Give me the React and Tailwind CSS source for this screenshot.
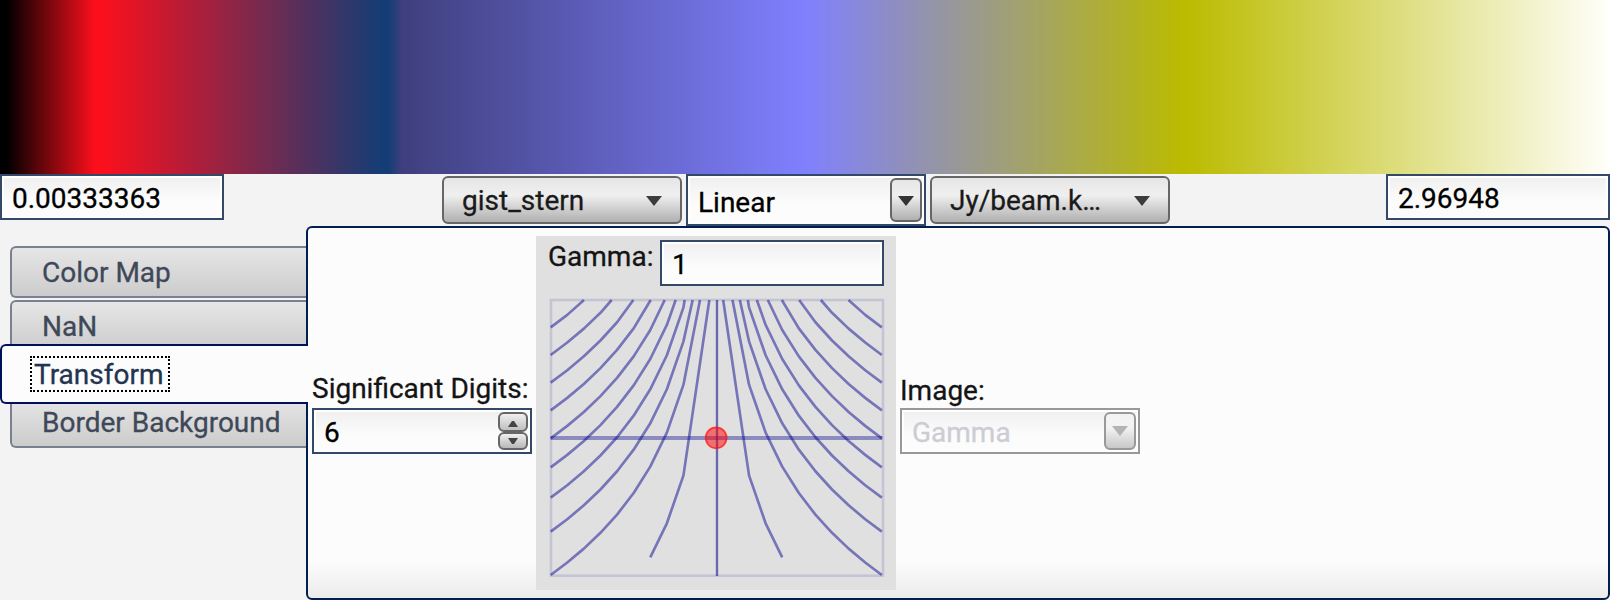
import React from "react";

const CENTER = 560;
const STEP = 49.8;
const TOP = 60;

// first: outermost sample (in tenths), y: height at that sample, top: x where the curve leaves the frame
const CURVES = [
  { first: 10, y: 142, top: 162 },
  { first: 10, y: 225, top: 245 },
  { first: 10, y: 308, top: 310 },
  { first: 10, y: 391, top: 362 },
  { first: 10, y: 475, top: 404 },
  { first: 10, y: 562, top: 437 },
  { first: 10, y: 653, top: 464 },
  { first: 10, y: 755, top: 488 },
  { first: 10, y: 885, top: 510 },
  { first: 4, y: 832, top: 538 },
];

function curvePoints({ first, y, top }, mirrored) {
  const points = [];
  for (let k = first; k >= 2; k--) {
    const py = y - 817 * Math.log10(first / k);
    if (py <= TOP + 15) break;
    points.push([CENTER - STEP * k, py]);
  }
  points.push([top, TOP]);
  return points
    .map(([px, py]) => `${mirrored ? 1117.5 - px : px},${py}`)
    .join(" ");
}

function GammaPlot() {
  return (
    <svg className="block h-[284px] w-[340px]" viewBox="48 48 1020 852" fill="none">
      <g stroke="#00008b" strokeOpacity="0.12" strokeWidth="8">
        <rect x="63" y="60" width="996" height="827" />
      </g>
      <path d="M62 474H1057" stroke="#00008b" strokeOpacity="0.38" strokeWidth="12" />
      <path d="M561 60V888" stroke="#00008b" strokeOpacity="0.54" strokeWidth="7" />
      <g stroke="#00008b" strokeOpacity="0.48" strokeWidth="8" strokeLinecap="butt" strokeLinejoin="round">
        {CURVES.map((c) => (
          <polyline key={`l${c.top}`} points={curvePoints(c, false)} />
        ))}
        {CURVES.map((c) => (
          <polyline key={`r${c.top}`} points={curvePoints(c, true)} />
        ))}
      </g>
      <circle cx="558.5" cy="473.5" r="31.5" fill="#ff0000" fillOpacity="0.5" stroke="#ff1414" strokeOpacity="0.75" strokeWidth="5" />
    </svg>
  );
}

function Triangle({ className = "" }) {
  return (
    <svg className={`block h-[10px] w-4 ${className}`} viewBox="0 0 16 10">
      <path d="M0 0H16L8 10Z" fill="currentColor" />
    </svg>
  );
}

const FIELD =
  "flex border-2 border-[#34496a] bg-linear-to-b from-[#efefef] to-[#fcfcfc] to-60% shadow-[inset_0_0_0_2px_#ffffff] text-black";

function Field({ value }) {
  return <div className={`${FIELD} h-[46px] w-56 pl-[10px] pt-[7px]`}>{value}</div>;
}

function SelectButton({ label }) {
  return (
    <button className="flex h-12 w-60 items-start justify-between rounded-[6px] border-2 border-[#666666] bg-linear-to-b from-[#e6e6e6] via-[#efefef] via-40% to-[#b0b0b0] pl-[18px] pr-[18px] pt-[7px] text-[#1a1a1a]">
      <span>{label}</span>
      <Triangle className="mt-[11px] text-[#3c3c3c]" />
    </button>
  );
}

function Tab({ label, className = "" }) {
  return (
    <div
      className={`ml-[10px] mr-[2px] h-[52px] rounded-l-[6px] border-2 border-r-0 border-[#7b8090] bg-linear-to-b from-[#e6e6e6] to-[#cccccc] pl-[30px] pt-[9px] text-[#3f4858] ${className}`}
    >
      {label}
    </div>
  );
}

export default function App() {
  return (
    <div className="flex h-[600px] w-[1610px] flex-col overflow-hidden bg-[#f3f3f3] font-['Roboto',sans-serif] text-[28px] leading-8 text-[#141414] [-webkit-text-stroke:0.3px]">
      <div className="h-[174px] shrink-0 bg-[linear-gradient(to_right,#000_0%,#000_0.4%,#fc0f1c_5.9%,#fc0f1c_6.3%,#143d75_23.7%,#143d75_24.1%,#3f3f7e_25%,#8080ff_50%,#bbbb00_73.6%,#fffffb_100%)]" />

      <div className="flex h-[52px] shrink-0 items-start justify-between">
        <Field value="0.00333363" />
        <div className="ml-[2px] flex items-start gap-1">
          <div className="pt-[2px]">
            <SelectButton label="gist_stern" />
          </div>
          <div className={`${FIELD} h-[52px] w-60 justify-between pl-[10px] pr-[2px]`}>
            <span className="pt-[11px]">Linear</span>
            <button className="mt-[2px] flex h-11 w-8 justify-center rounded-[6px] border-2 border-[#666666] bg-linear-to-b from-[#e6e6e6] via-[#efefef] via-40% to-[#b0b0b0] pt-4">
              <Triangle className="text-[#333333]" />
            </button>
          </div>
          <div className="pt-[2px]">
            <SelectButton label="Jy/beam.k…" />
          </div>
        </div>
        <Field value="2.96948" />
      </div>

      <div className="flex h-[374px] shrink-0">
        <div className="relative z-10 w-[308px] shrink-0 pt-5">
          <Tab label="Color Map" />
          <Tab label="NaN" className="mt-[2px]" />
          <div className="relative -mt-2 h-[60px] rounded-l-[6px] border-2 border-r-0 border-[#00115c] bg-[#fcfcfc] pl-7 pt-[10px] text-[#22344f]">
            <span className="inline-block h-9 w-[140px] border-2 border-dotted border-black pl-[2px] leading-[34px]">Transform</span>
          </div>
          <Tab label="Border Background" className="relative -z-10 -mt-2" />
        </div>

        <div className="-ml-[2px] flex min-w-0 flex-1 items-start rounded-[6px] border-2 border-[#001f50] bg-linear-to-b from-[#fcfcfc] from-90% to-[#ebebeb] pl-1">
          <div className="w-[220px] shrink-0 pt-[145px]">
            <div>Significant Digits:</div>
            <div className={`${FIELD} mt-[3px] h-[46px] w-[220px] justify-between pl-[10px] pr-[2px]`}>
              <span className="pt-[7px]">6</span>
              <div className="flex flex-col pt-[2px]">
                <button className="flex h-5 w-[30px] items-center justify-center rounded-[6px] border-2 border-[#666666] bg-linear-to-b from-[#efefef] to-[#c0c0c0] pt-1">
                  <svg className="block h-[6px] w-[10px]" viewBox="0 0 10 6">
                    <path d="M0 6L4 0H6L10 6Z" fill="#444" />
                  </svg>
                </button>
                <button className="flex h-[18px] w-[30px] items-center justify-center rounded-[6px] border-2 border-[#666666] bg-linear-to-b from-[#efefef] to-[#b8b8b8]">
                  <svg className="block h-[6px] w-[10px]" viewBox="0 0 10 6">
                    <path d="M0 0H10L6 6H4Z" fill="#444" />
                  </svg>
                </button>
              </div>
            </div>
          </div>

          <div className="ml-1 mt-2 h-[354px] w-[360px] shrink-0 bg-[#e0e0e0] pt-1">
            <div className="flex justify-between pl-3 pr-3">
              <span className="pt-px">Gamma:</span>
              <Field value="1" />
            </div>
            <div className="pl-[10px] pt-[10px]">
              <GammaPlot />
            </div>
          </div>

          <div className="ml-1 w-60 shrink-0 pt-[147px]">
            <div>Image:</div>
            <div className="mt-px flex h-[46px] w-60 justify-between border-2 border-[#999999] bg-linear-to-b from-[#efefef] to-[#fcfcfc] to-60% pl-[10px] pr-[2px] text-[#cccdd3] shadow-[inset_0_0_0_2px_#ffffff]">
              <span className="pt-[7px]">Gamma</span>
              <button className="mt-[2px] flex h-[38px] w-8 justify-center rounded-[6px] border-2 border-[#999999] bg-linear-to-b from-[#f3f3f3] via-[#f3f3f3] via-40% to-[#c8c8c8] pt-3">
                <Triangle className="text-[#b3b3b3]" />
              </button>
            </div>
          </div>
        </div>
      </div>
    </div>
  );
}
